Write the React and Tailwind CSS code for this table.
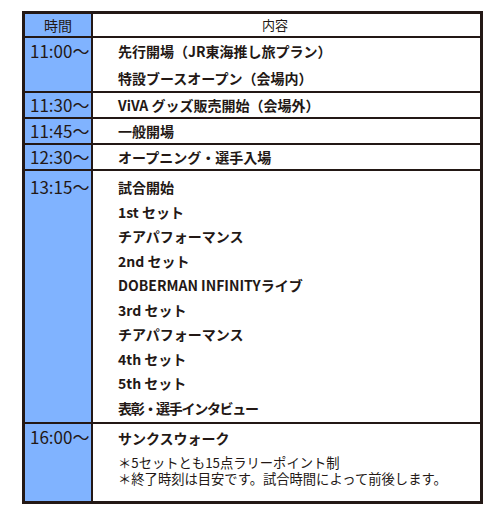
import React from "react";

const F = { fontFamily: '"Noto Sans CJK JP", "Noto Sans", sans-serif' };

function Row({ time, children, h, tpad = "pt-[1px]", last }) {
  return (
    <div className={`flex box-border ${last ? "" : "border-b-2 border-[#231815]"}`} style={{ height: h }}>
      <div className={`w-[68px] shrink-0 box-border bg-[#80b3ff] border-r-2 border-[#231815] pl-[5px] text-[17px] leading-[24px] text-[#231815] ${tpad}`}>
        {time}
      </div>
      <div className="flex-1 pl-[25px] text-[#231815]">{children}</div>
    </div>
  );
}

export default function App() {
  return (
    <div className="w-[500px] h-[512px] bg-white" style={F}>
      <div className="pt-[11px] pl-[22px]">
        <div className="w-[461px] border-[3px] border-[#231815] box-border">
          <div className="flex h-[24px] box-border border-b-2 border-[#231815]">
            <div className="w-[68px] shrink-0 box-border bg-[#80b3ff] border-r-2 border-[#231815] flex items-center justify-center text-[14px] leading-[22px] text-[#231815]">
              時間
            </div>
            <div className="flex-1 flex items-center justify-center pr-[23px] text-[13px] leading-[22px] text-[#231815]">
              内容
            </div>
          </div>
          <Row time="11:00〜" h={55}>
            <div className="font-bold text-[14px] leading-[27px]">
              <div>先行開場（JR東海推し旅プラン）</div>
              <div>特設ブースオープン（会場内）</div>
            </div>
          </Row>
          <Row time="11:30〜" h={26} tpad="">
            <div className="font-bold text-[14px] leading-[24px]">ViVA グッズ販売開始（会場外）</div>
          </Row>
          <Row time="11:45〜" h={26} tpad="">
            <div className="font-bold text-[14px] leading-[24px]">一般開場</div>
          </Row>
          <Row time="12:30〜" h={26} tpad="">
            <div className="font-bold text-[14px] leading-[24px]">オープニング・選手入場</div>
          </Row>
          <Row time="13:15〜" h={253} tpad="pt-[4px]">
            <div className="font-bold text-[14px] leading-[24.5px] pt-[4px]">
              <div>試合開始</div>
              <div>1st セット</div>
              <div>チアパフォーマンス</div>
              <div>2nd セット</div>
              <div>DOBERMAN INFINITYライブ</div>
              <div>3rd セット</div>
              <div>チアパフォーマンス</div>
              <div>4th セット</div>
              <div>5th セット</div>
              <div className="tracking-[-1.3px]">表彰・選手インタビュー</div>
            </div>
          </Row>
          <Row time="16:00〜" h={77} last>
            <div className="pt-[2px]">
              <div className="font-bold text-[14px] leading-[24px]">サンクスウォーク</div>
              <div className="mt-[5px] text-[13.3px] leading-[16px]">
                <div>＊5セットとも15点ラリーポイント制</div>
                <div>＊終了時刻は目安です。試合時間によって前後します。</div>
              </div>
            </div>
          </Row>
        </div>
      </div>
    </div>
  );
}
